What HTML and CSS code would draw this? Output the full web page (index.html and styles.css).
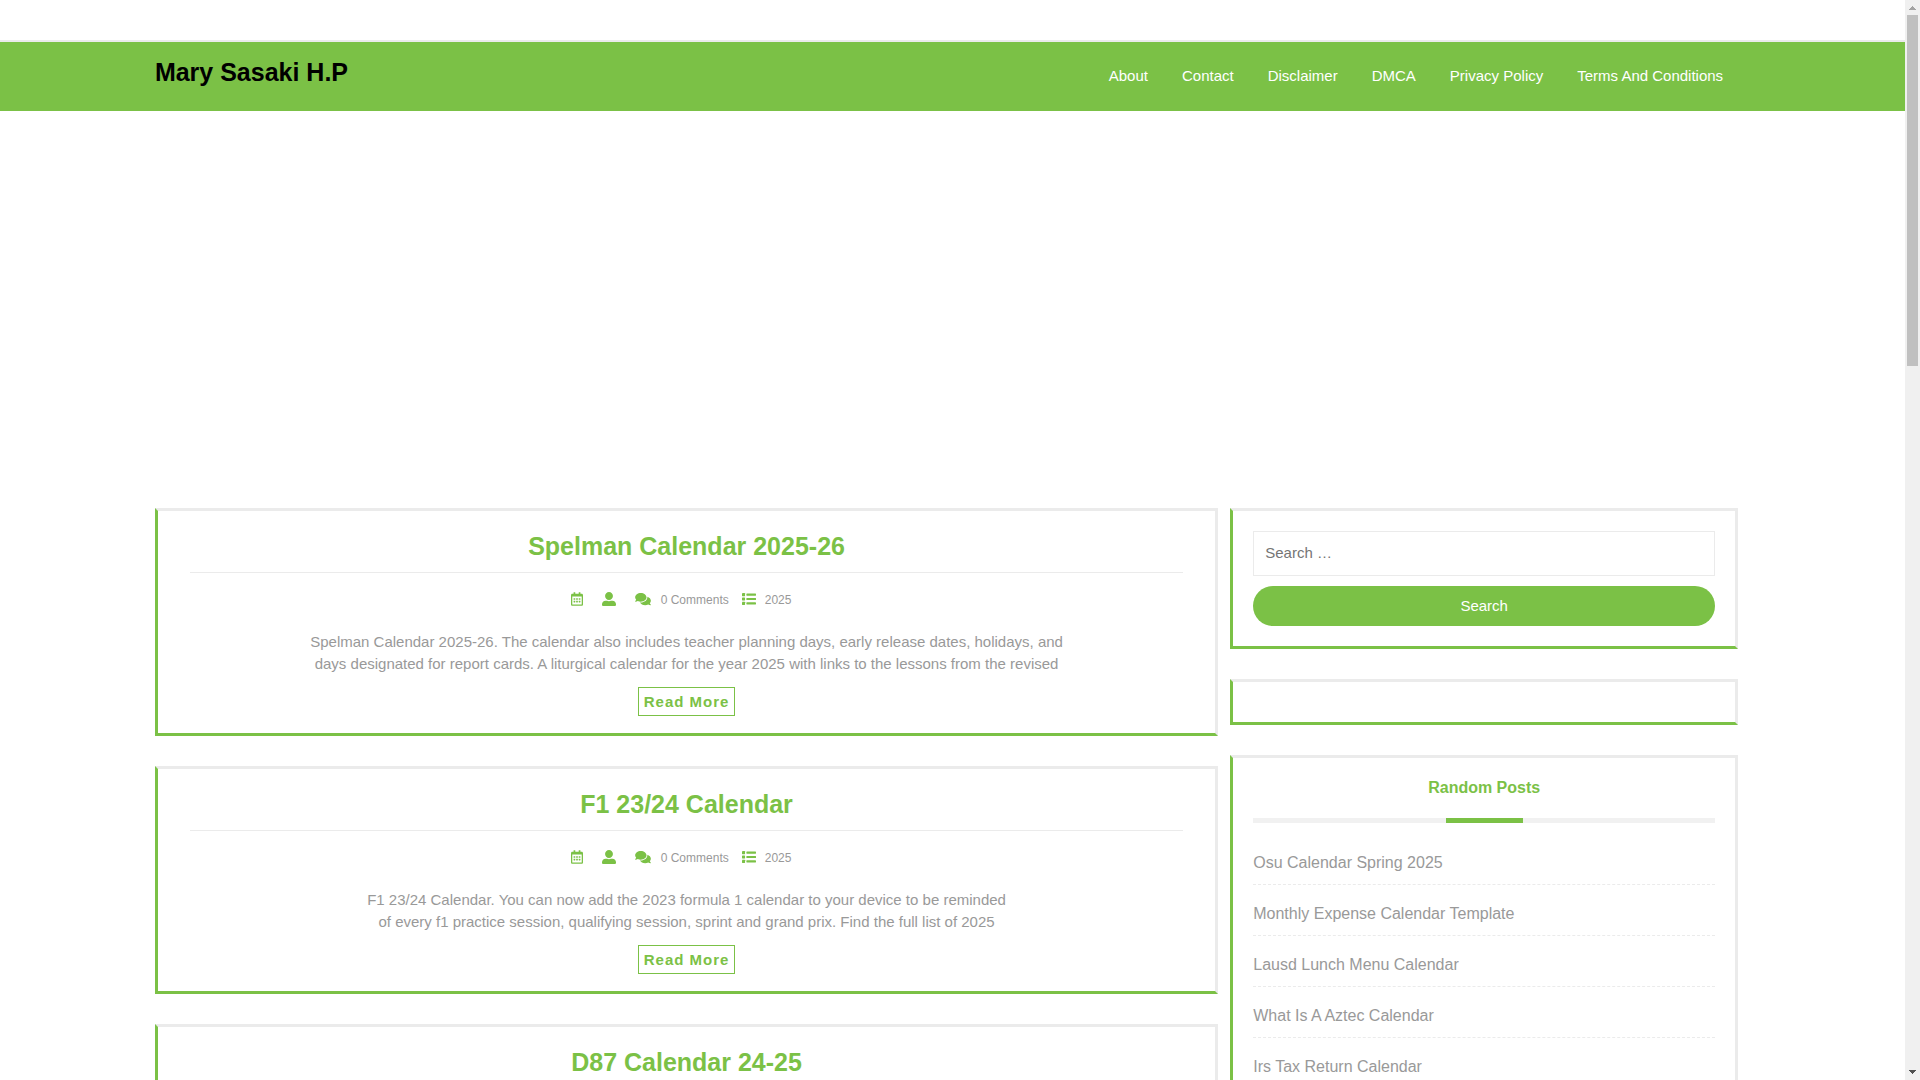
FILE: index.html
```html
<!DOCTYPE html>
<html lang="en">
<head>
  <meta charset="UTF-8">
  <title>Mary Sasaki H.P</title>
  <meta name="viewport" content="width=device-width, initial-scale=1.0">
  <link rel="stylesheet" href="styles.css">
</head>
<body>

  <!-- icon sprite -->
  <svg class="sprite" aria-hidden="true">
    <symbol id="calendar" viewBox="0 0 448 512">
      <path d="M148 288h-40c-6.6 0-12-5.4-12-12v-40c0-6.6 5.4-12 12-12h40c6.6 0 12 5.4 12 12v40c0 6.6-5.4 12-12 12zm108-12v-40c0-6.6-5.4-12-12-12h-40c-6.6 0-12 5.4-12 12v40c0 6.6 5.4 12 12 12h40c6.6 0 12-5.4 12-12zm96 0v-40c0-6.6-5.4-12-12-12h-40c-6.6 0-12 5.4-12 12v40c0 6.6 5.4 12 12 12h40c6.6 0 12-5.4 12-12zm-96 96v-40c0-6.6-5.4-12-12-12h-40c-6.6 0-12 5.4-12 12v40c0 6.6 5.4 12 12 12h40c6.6 0 12-5.4 12-12zm-96 0v-40c0-6.6-5.4-12-12-12h-40c-6.6 0-12 5.4-12 12v40c0 6.6 5.4 12 12 12h40c6.6 0 12-5.4 12-12zm192 0v-40c0-6.6-5.4-12-12-12h-40c-6.6 0-12 5.4-12 12v40c0 6.6 5.4 12 12 12h40c6.6 0 12-5.4 12-12zm96-260v352c0 26.5-21.5 48-48 48H48c-26.5 0-48-21.5-48-48V112c0-26.5 21.5-48 48-48h48V12c0-6.6 5.4-12 12-12h40c6.6 0 12 5.4 12 12v52h128V12c0-6.6 5.4-12 12-12h40c6.6 0 12 5.4 12 12v52h48c26.5 0 48 21.5 48 48zm-48 346V160H48v298c0 3.3 2.7 6 6 6h340c3.3 0 6-2.7 6-6z"/>
    </symbol>
    <symbol id="user" viewBox="0 0 512 512">
      <path d="M256 288c79.5 0 144-64.5 144-144S335.5 0 256 0 112 64.5 112 144s64.5 144 144 144zm128 32h-55.1c-22.2 10.2-46.9 16-72.9 16s-50.6-5.8-72.9-16H128C57.3 320 0 377.3 0 448v16c0 26.5 21.5 48 48 48h416c26.5 0 48-21.5 48-48v-16c0-70.7-57.3-128-128-128z"/>
    </symbol>
    <symbol id="comments" viewBox="0 0 576 512">
      <path d="M416 192c0-88.4-93.1-160-208-160S0 103.6 0 192c0 34.3 14.1 65.9 38 92-13.4 30.2-35.5 54.2-35.8 54.5-2.2 2.3-2.8 5.7-1.5 8.7S4.8 352 8 352c36.6 0 66.9-12.3 88.7-25 32.2 15.7 70.3 25 111.3 25 114.9 0 208-71.6 208-160zm122 220c23.9-26 38-57.7 38-92 0-66.9-53.5-124.2-129.3-148.1.9 6.6 1.3 13.3 1.3 20.1 0 105.9-107.7 192-240 192-10.8 0-21.3-.8-31.7-1.9C207.8 439.6 281.8 480 368 480c41 0 79.1-9.2 111.3-25 21.8 12.7 52.1 25 88.7 25 3.2 0 6.1-1.9 7.3-4.8 1.3-2.9.7-6.3-1.5-8.7-.3-.3-22.4-24.2-35.8-54.5z"/>
    </symbol>
    <symbol id="list" viewBox="0 0 512 512">
      <rect x="0" y="40" width="112" height="112" rx="16"/>
      <rect x="0" y="200" width="112" height="112" rx="16"/>
      <rect x="0" y="360" width="112" height="112" rx="16"/>
      <rect x="160" y="56" width="352" height="80" rx="16"/>
      <rect x="160" y="216" width="352" height="80" rx="16"/>
      <rect x="160" y="376" width="352" height="80" rx="16"/>
    </symbol>
  </svg>

  <div class="page">
    <div class="top-bar"></div>

    <header class="header">
      <div class="container header-inner">
        <h1 class="logo"><a href="#">Mary Sasaki H.P</a></h1>
        <nav class="nav">
          <a href="#">About</a>
          <a href="#">Contact</a>
          <a href="#">Disclaimer</a>
          <a href="#">DMCA</a>
          <a href="#">Privacy Policy</a>
          <a href="#">Terms And Conditions</a>
        </nav>
      </div>
    </header>

    <div class="container content">
      <main class="posts">
        <article class="box post">
          <h2><a href="#">Spelman Calendar 2025-26</a></h2>
          <div class="meta">
            <svg class="icon icon-date"><use href="#calendar"/></svg>
            <svg class="icon icon-user"><use href="#user"/></svg>
            <svg class="icon icon-comments"><use href="#comments"/></svg>
            <span class="comments">0 Comments</span>
            <svg class="icon icon-list"><use href="#list"/></svg>
            <a href="#">2025</a>
          </div>
          <p>Spelman Calendar 2025-26. The calendar also includes teacher planning days, early release dates, holidays, and<br>days designated for report cards. A liturgical calendar for the year 2025 with links to the lessons from the revised</p>
          <a class="read-more" href="#">Read More</a>
        </article>

        <article class="box post">
          <h2><a href="#">F1 23/24 Calendar</a></h2>
          <div class="meta">
            <svg class="icon icon-date"><use href="#calendar"/></svg>
            <svg class="icon icon-user"><use href="#user"/></svg>
            <svg class="icon icon-comments"><use href="#comments"/></svg>
            <span class="comments">0 Comments</span>
            <svg class="icon icon-list"><use href="#list"/></svg>
            <a href="#">2025</a>
          </div>
          <p>F1 23/24 Calendar. You can now add the 2023 formula 1 calendar to your device to be reminded<br>of every f1 practice session, qualifying session, sprint and grand prix. Find the full list of 2025</p>
          <a class="read-more" href="#">Read More</a>
        </article>

        <article class="box post">
          <h2><a href="#">D87 Calendar 24-25</a></h2>
        </article>
      </main>

      <aside class="sidebar">
        <section class="box widget">
          <form class="search" role="search">
            <input type="search" placeholder="Search …" aria-label="Search for">
            <button type="submit">Search</button>
          </form>
        </section>

        <section class="box widget"></section>

        <section class="box widget">
          <h3>Random Posts</h3>
          <ul>
            <li><a href="#">Osu Calendar Spring 2025</a></li>
            <li><a href="#">Monthly Expense Calendar Template</a></li>
            <li><a href="#">Lausd Lunch Menu Calendar</a></li>
            <li><a href="#">What Is A Aztec Calendar</a></li>
            <li><a href="#">Irs Tax Return Calendar</a></li>
          </ul>
        </section>
      </aside>
    </div>
  </div>

  <!-- scroll bar -->
  <div class="scrollbar" aria-hidden="true">
    <svg class="arrow arrow-up" viewBox="0 0 7 4"><path d="M3 0h1v1h1v1h1v1h1v1H0V3h1V2h1V1h1z"/></svg>
    <div class="thumb"></div>
    <svg class="arrow arrow-down" viewBox="0 0 7 4"><path d="M0 0h7v1H6v1H5v1H4v1H3V3H2V2H1V1H0z"/></svg>
  </div>

</body>
</html>
```
FILE: styles.css
```css
* {
  box-sizing: border-box;
}

body {
  margin: 0;
  display: flex;
  height: 100vh;
  overflow: hidden;
  background: #fff;
  color: #999;
  font-family: "Liberation Sans", Arial, sans-serif;
  font-size: 15px;
  line-height: 22px;
}

a {
  color: inherit;
  text-decoration: none;
}

h1, h2, h3, p, ul {
  margin: 0;
  padding: 0;
}

.sprite {
  position: absolute;
  width: 0;
  height: 0;
}

.page {
  flex: 1;
  min-width: 0;
}

.container {
  width: 85%;
  margin: 0 auto;
  padding: 0 24px 0 12px;
}

/* header */
.top-bar {
  height: 42px;
  border-bottom: 2px solid #ebebeb;
}

.header {
  background: #7bc146;
}

.header-inner {
  display: flex;
  justify-content: space-between;
  align-items: flex-start;
  padding-top: 15px;
  padding-bottom: 24px;
}

.logo {
  font-size: 25px;
  line-height: 30px;
  color: #000;
}

.nav {
  display: flex;
  gap: 34px;
  padding: 8px 15px 0 0;
  color: #fff;
}

/* boxes */
.content {
  display: grid;
  grid-template-columns: 67fr 32fr;
  gap: 12px;
  align-items: start;
  margin-top: 397px;
}

.posts,
.sidebar {
  display: grid;
  gap: 30px;
}

.box {
  border: 3px solid #ebebeb;
  border-left-color: #7bc146;
  border-bottom-color: #7bc146;
}

/* posts */
.post {
  padding: 20px 32px 17px;
  text-align: center;
}

.post h2 {
  padding-bottom: 11px;
  border-bottom: 1px solid #ebebeb;
  color: #7bc146;
  font-size: 25px;
  line-height: 30px;
}

.meta {
  display: flex;
  justify-content: center;
  align-items: center;
  margin: 16px 0 20px;
  padding-right: 11px;
  font-size: 12px;
}

.icon {
  width: 14px;
  height: 14px;
  margin-bottom: 2px;
  fill: #7bc146;
}

.icon-date {
  width: 12px;
  margin-right: 19px;
}

.icon-user {
  margin-right: 19px;
}

.icon-comments {
  width: 16px;
  margin-right: 10px;
}

.comments {
  margin-right: 13px;
}

.icon-list {
  margin-right: 9px;
}

.read-more {
  display: inline-block;
  margin-top: 12px;
  padding: 3px 5px 2px;
  border: 1px solid #7bc146;
  color: #7bc146;
  font-weight: bold;
  letter-spacing: 1px;
}

/* sidebar */
.widget {
  padding: 20px;
}

.search {
  display: grid;
  gap: 10px;
}

.search input {
  width: 100%;
  height: 45px;
  padding: 0 11px 2px;
  border: 1px solid #ebebeb;
  background: #fff;
  font: inherit;
  appearance: none;
}

.search input::placeholder {
  color: #757575;
}

.search button {
  height: 40px;
  border: 0;
  border-radius: 20px;
  background: #7bc146;
  color: #fff;
  font: inherit;
}

.widget h3 {
  color: #7bc146;
  font-size: 16px;
  line-height: 20px;
  text-align: center;
}

/* grey line with the green part in the middle */
.widget h3::after {
  content: "";
  display: block;
  height: 5px;
  margin: 20px 0 11px;
  background: linear-gradient(#7bc146, #7bc146) center / calc(100% / 6) 100% no-repeat #f1f1f1;
}

.widget ul {
  list-style: none;
}

.widget li {
  padding: 18px 0 10px;
  border-bottom: 1px dashed #ebebeb;
  font-size: 16px;
}

/* scroll bar */
.scrollbar {
  display: flex;
  flex-direction: column;
  align-items: center;
  width: 15px;
  background: #f0f0f0;
}

.arrow {
  width: 7px;
  height: 4px;
  fill: #505050;
}

.arrow-up {
  margin: 6px 0 5px;
  fill: #a3a3a3;
}

.thumb {
  width: 11px;
  height: 351px;
  background: #c0c0c0;
}

.arrow-down {
  margin: auto 0 6px;
}
```
